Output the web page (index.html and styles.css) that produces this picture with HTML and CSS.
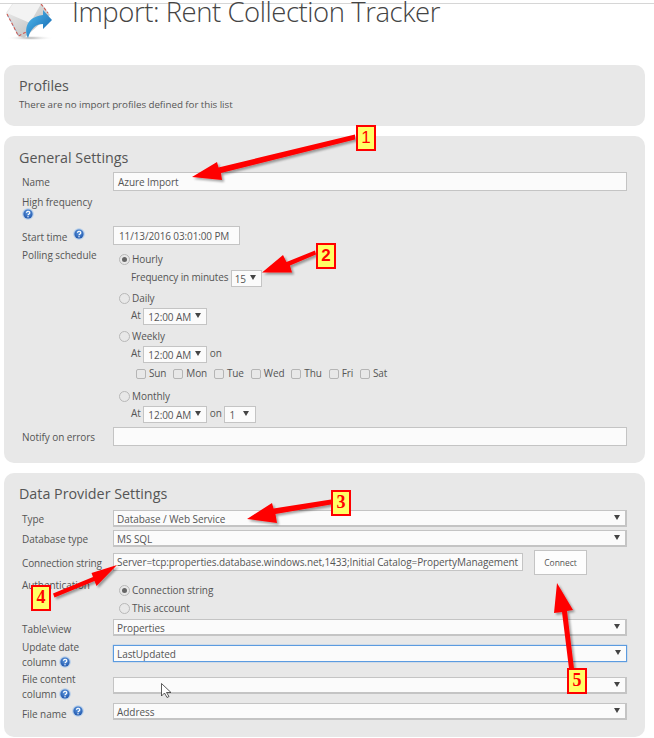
FILE: index.html
```html
<!DOCTYPE html>
<html lang="en">
<head>
<meta charset="utf-8">
<title>Import: Rent Collection Tracker</title>
<link rel="stylesheet" href="styles.css">
</head>
<body>
<svg width="0" height="0" class="defs">
  <defs>
    <radialGradient id="helpg" cx="50%" cy="35%" r="65%">
      <stop offset="0" stop-color="#5f9ae0"/><stop offset="1" stop-color="#1f55ab"/>
    </radialGradient>
    <symbol id="help" viewBox="0 0 12 12">
      <circle cx="6" cy="6" r="5.8" fill="#b4cdea"/>
      <circle cx="6" cy="6" r="4.6" fill="url(#helpg)"/>
      <path d="M4.4 4.8a1.7 1.5 0 1 1 2.5 1.3c-.6.3-.9.6-.9 1.1" fill="none" stroke="#fff" stroke-width="1.2"/>
      <circle cx="6" cy="8.8" r=".7" fill="#fff"/>
    </symbol>
  </defs>
</svg>
<div class="topline"></div>
<header class="header">
  <svg class="logo" viewBox="0 4 54 42">
    <defs>
      <linearGradient id="env" x1="0" y1="0" x2="1" y2="1"><stop offset="0" stop-color="#eeeeee"/><stop offset="1" stop-color="#b8b8b8"/></linearGradient>
      <linearGradient id="arr" x1="0" y1="0" x2="1" y2="1"><stop offset="0" stop-color="#55bdee"/><stop offset="1" stop-color="#0f62ae"/></linearGradient>
      <radialGradient id="shd"><stop offset="0" stop-color="#aaa"/><stop offset="1" stop-color="#fff" stop-opacity="0"/></radialGradient>
    </defs>
    <ellipse cx="30" cy="38" rx="24" ry="2.500" fill="url(#shd)"/>
    <path d="M6 13 12 4H42L50 15 24 38 18 36Z" fill="url(#env)"/>
    <path d="M7 13 30 23 41 4H13Z" fill="#f3f3f3"/>
    <path d="M7 14 18.500 36 28 31" fill="none" stroke="#cf5a52" stroke-width="1.100" stroke-dasharray="3 2"/>
    <path d="M8 16 19 36" fill="none" stroke="#6f93c6" stroke-width=".6" stroke-dasharray="2 3"/>
    <path d="M41 4 48 13" fill="none" stroke="#cf5a52" stroke-width="1.100" stroke-dasharray="3 2"/>
    <path d="M43 10 52 20 43 29V24C36 24 31 28 28 38 24 30 26 17 43 15Z" fill="url(#arr)"/>
  </svg>
  <h1 class="title">Import: Rent Collection Tracker</h1>
</header>

<main class="panels">
  <section class="panel panel-profiles">
    <h2 class="panel-title">Profiles</h2>
    <p class="note">There are no import profiles defined for this list</p>
  </section>

  <section class="panel panel-general">
    <h2 class="panel-title">General Settings</h2>
    <div class="row row-name"><div class="label">Name</div><div class="field input">Azure Import</div></div>
    <div class="row row-high"><div class="label">High frequency<svg class="help help-block"><use href="#help"/></svg></div></div>
    <div class="row row-start"><div class="label">Start time <svg class="help help-inline"><use href="#help"/></svg></div><div class="field input date">11/13/2016 03:01:00 PM</div></div>
    <div class="row row-poll">
      <div class="label">Polling schedule</div>
      <div class="options">
        <div class="opt"><span class="radio on"></span>Hourly</div>
        <div class="sub sub-freq">Frequency in minutes <span class="field select s-15">15<i class="caret"></i></span></div>
        <div class="opt opt-next"><span class="radio"></span>Daily</div>
        <div class="sub">At <span class="field select s-time">12:00 AM<i class="caret"></i></span></div>
        <div class="opt opt-next"><span class="radio"></span>Weekly</div>
        <div class="sub">At <span class="field select s-time">12:00 AM<i class="caret"></i></span> on</div>
        <div class="days">
          <span class="day"><span class="check"></span>Sun</span>
          <span class="day"><span class="check"></span>Mon</span>
          <span class="day"><span class="check"></span>Tue</span>
          <span class="day"><span class="check"></span>Wed</span>
          <span class="day"><span class="check"></span>Thu</span>
          <span class="day"><span class="check"></span>Fri</span>
          <span class="day"><span class="check"></span>Sat</span>
        </div>
        <div class="opt opt-monthly"><span class="radio"></span>Monthly</div>
        <div class="sub">At <span class="field select s-time">12:00 AM<i class="caret"></i></span> on <span class="field select s-day">1<i class="caret"></i></span></div>
      </div>
    </div>
    <div class="row row-notify"><div class="label">Notify on errors</div><div class="field input"></div></div>
  </section>

  <section class="panel panel-data">
    <h2 class="panel-title">Data Provider Settings</h2>
    <div class="row row-type"><div class="label">Type</div><div class="field select wide">Database / Web Service<i class="caret"></i></div></div>
    <div class="row row-db"><div class="label">Database type</div><div class="field select wide">MS SQL<i class="caret"></i></div></div>
    <div class="row row-conn">
      <div class="label">Connection string</div>
      <div class="field input conn">Server=tcp:properties.database.windows.net,1433;Initial Catalog=PropertyManagement</div>
      <div class="button">Connect</div>
    </div>
    <div class="row row-auth">
      <div class="label">Authentication</div>
      <div class="options">
        <div class="opt"><span class="radio on"></span>Connection string</div>
        <div class="opt opt-acct"><span class="radio"></span>This account</div>
      </div>
    </div>
    <div class="row row-table"><div class="label">Table\view</div><div class="field select wide">Properties<i class="caret"></i></div></div>
    <div class="row row-update"><div class="label">Update date<br>column <svg class="help"><use href="#help"/></svg></div><div class="field select wide focus">LastUpdated<i class="caret"></i></div></div>
    <div class="row row-content"><div class="label">File content<br>column <svg class="help"><use href="#help"/></svg></div><div class="field select wide"><i class="caret"></i></div></div>
    <div class="row row-file"><div class="label">File name <svg class="help help-inline"><use href="#help"/></svg></div><div class="field select wide">Address<i class="caret"></i></div></div>
  </section>
</main>

<svg class="overlay" viewBox="0 0 654 738" width="654" height="738">
  <defs>
    <filter id="shadow" x="-10%" y="-10%" width="130%" height="130%"><feDropShadow dx="2" dy="2" stdDeviation="1.200" flood-color="#000" flood-opacity=".35"/></filter>
  </defs>
  <g fill="#ff0000" filter="url(#shadow)">
    <path d="M355 134.500V139.500L221 173 222 180 192 177 217 162 218.500 167.500Z"/>
    <path d="M315 250.500 316 254.500 290 265.500 292 272.500H262L283 255 286.500 262Z"/>
    <path d="M331 499.500V504.500L275.500 514 277 523 247 519 272 503 273.500 508.500Z"/>
    <path d="M53 593.500 93 577 91.500 573 117 565 96.500 586 94.500 581 54.500 597.500Z"/>
    <path d="M569 668.500H574L567 611 573 610 557 583 554 613 562 612Z"/>
  </g>
  <path class="cursor" d="M161.500 683.500V696L164.500 693 167 697.500 169 696.500 166.500 692.500H171Z"/>
</svg>
<div class="callout c1">1</div>
<div class="callout c2">2</div>
<div class="callout c3">3</div>
<div class="callout c4">4</div>
<div class="callout c5">5</div>
</body>
</html>
```
FILE: styles.css
```css
html, body { margin: 0; padding: 0; }
body {
  width: 654px;
  height: 738px;
  overflow: hidden;
  position: relative;
  background: #fff;
  font-family: "Open Sans", "Noto Sans", sans-serif;
  font-size: 10px;
  letter-spacing: -0.06px;
  color: #555;
}
.defs { position: absolute; }
.topline { height: 1px; margin-top: 3px; background: #d6d6d6; }
.header { display: flex; height: 61px; position: relative; overflow: visible; }
.logo { width: 54px; height: 42px; flex: none; }
.title {
  margin: -11px 0 0 18px;
  font-weight: 300;
  font-size: 27.500px;
  letter-spacing: -0.450px;
  line-height: 38px;
  color: #444;
  white-space: nowrap;
}
.panels { display: flex; flex-direction: column; gap: 10px; margin: 0 9px 0 4px; }
.panel { background: #e8e8e8; border-radius: 10px; padding: 0 18px 0 15px; box-sizing: border-box; }
.panel-profiles { height: 61px; padding-top: 12px; }
.panel-general { height: 327px; padding-top: 13px; }
.panel-data { height: 264px; padding-top: 12px; }
.panel-title { margin: 0; font-weight: 400; font-size: 14.300px; letter-spacing: 0; line-height: 17px; color: #555; }
.note { margin: 4px 0 0; line-height: 13px; font-size: 9.800px; }
.row { display: flex; align-items: flex-start; }
.label { width: 94px; padding-left: 3px; box-sizing: border-box; flex: none; line-height: 15px; }
.field {
  box-sizing: border-box;
  background: #fbfbfb;
  border: 1px solid #c4c4c4;
  color: #555;
  white-space: nowrap;
  position: relative;
}
.input { flex: 1; height: 19px; line-height: 18px; padding-left: 4px; }
.select { display: inline-block; vertical-align: middle; line-height: 16px; padding-left: 3px; }
.wide { flex: 1; height: 17px; border-width: 1px 2px 2px 1px; line-height: 16px; }
.caret {
  position: absolute; right: 5px; top: 4px;
  width: 0; height: 0;
  border-left: 3px solid transparent; border-right: 3px solid transparent;
  border-top: 5px solid #444;
}
.help { width: 12px; height: 12px; vertical-align: -2px; display: inline-block; }
.help-block { display: block; margin-top: -1px; }
.help-inline { vertical-align: 1px; margin-left: 3px; }
.row-name { margin-top: 6px; height: 19px; }
.row-name .label { line-height: 21px; }
.row-high { margin-top: 4px; height: 31px; }
.row-high .label { line-height: 14px; }
.row-start { height: 19px; }
.row-start .label { line-height: 22px; }
.date { flex: none; width: 127px; padding-left: 5px; letter-spacing: -0.120px; }
.row-poll { margin-top: 3px; }
.options { display: flex; flex-direction: column; padding-left: 6px; padding-top: 4px; }
.opt { display: flex; align-items: center; height: 15px; line-height: 15px; }
.radio {
  width: 9px; height: 9px; border-radius: 50%;
  background: #e8e8e8; border: 1px solid #b8b8b8; margin-right: 2px; flex: none; position: relative;
}
.radio.on::after { content: ""; position: absolute; left: 2px; top: 2px; width: 5px; height: 5px; border-radius: 50%; background: #666; }
.sub { padding-left: 12px; line-height: 17px; height: 17px; margin-top: 1px; white-space: nowrap; }
.sub-freq { margin-top: 2px; letter-spacing: -0.160px; }
.s-15 { width: 31px; height: 17px; }
.s-time { width: 64px; height: 17px; padding-left: 4px; }
.s-day { width: 32px; height: 17px; padding-left: 4px; }
.s-day .caret { right: 6px; }
.opt-next { margin-top: 5px; }
.opt-monthly { margin-top: 8px; }
.days { display: flex; gap: 7px; margin-top: 4px; padding-left: 17px; line-height: 15px; height: 15px; letter-spacing: -0.150px; }
.day { display: flex; align-items: center; }
.check { width: 8px; height: 8px; border: 1px solid #b5b5b5; border-radius: 2px; margin-right: 3px; }
.row-notify { margin-top: 5px; height: 19px; }
.row-notify .label { line-height: 20px; }
.row-type { margin-top: 8px; height: 17px; }
.row-type .label { line-height: 19px; }
.row-db { margin-top: 3px; height: 17px; }
.row-db .label { line-height: 19px; }
.row-conn { margin-top: 3px; height: 25px; }
.row-conn .label { line-height: 20px; padding-top: 3px; letter-spacing: -0.150px; }
.conn { flex: none; width: 410px; height: 18px; line-height: 17px; overflow: hidden; padding-left: 3px; margin-top: 3px; letter-spacing: -0.080px; }
.button {
  margin: 0 0 0 11px; width: 53px; height: 25px; box-sizing: border-box;
  background: #fdfdfd; border: 1px solid #c4c4c4;
  font-size: 8.500px; line-height: 23px; text-align: center; color: #555;
}
.row-auth { height: 44px; }
.row-auth .label { margin-top: 3px; }
.row-auth .options { padding-top: 8px; }
.opt-acct { margin-top: 3px; }
.row-table { height: 17px; }
.row-table .label { line-height: 21px; }
.row-update { margin-top: 4px; height: 32px; }
.row-update .field { margin-top: 5px; }
.row-content { height: 31px; }
.row-content .field { margin-top: 5px; }
.focus { border: 1px solid #5b9be0; box-shadow: 0 0 1px #5b9be0; }
.row-file { height: 17px; }
.row-file .label { line-height: 23px; }
.overlay { position: absolute; left: 0; top: 0; pointer-events: none; }
.cursor { fill: #fff; stroke: #333; stroke-width: .8; }
.callout {
  position: absolute; box-sizing: border-box; width: 20px; height: 26px;
  background: #ffff66; border: 2px solid #f00; color: #f00;
  font-family: "Liberation Sans", sans-serif; font-weight: 700; font-size: 17px; letter-spacing: 0; line-height: 21px; text-align: center;
}
.c1 { left: 356px; top: 125px; font-weight: 400; }
.c2 { left: 316px; top: 243px; }
.c3 { left: 331px; top: 490px; font-family: "Liberation Serif", serif; font-size: 18px; }
.c4 { left: 31px; top: 585px; font-family: "Liberation Serif", serif; font-size: 18px; }
.c5 { left: 567px; top: 668px; font-family: "Liberation Serif", serif; font-size: 18px; }
```
